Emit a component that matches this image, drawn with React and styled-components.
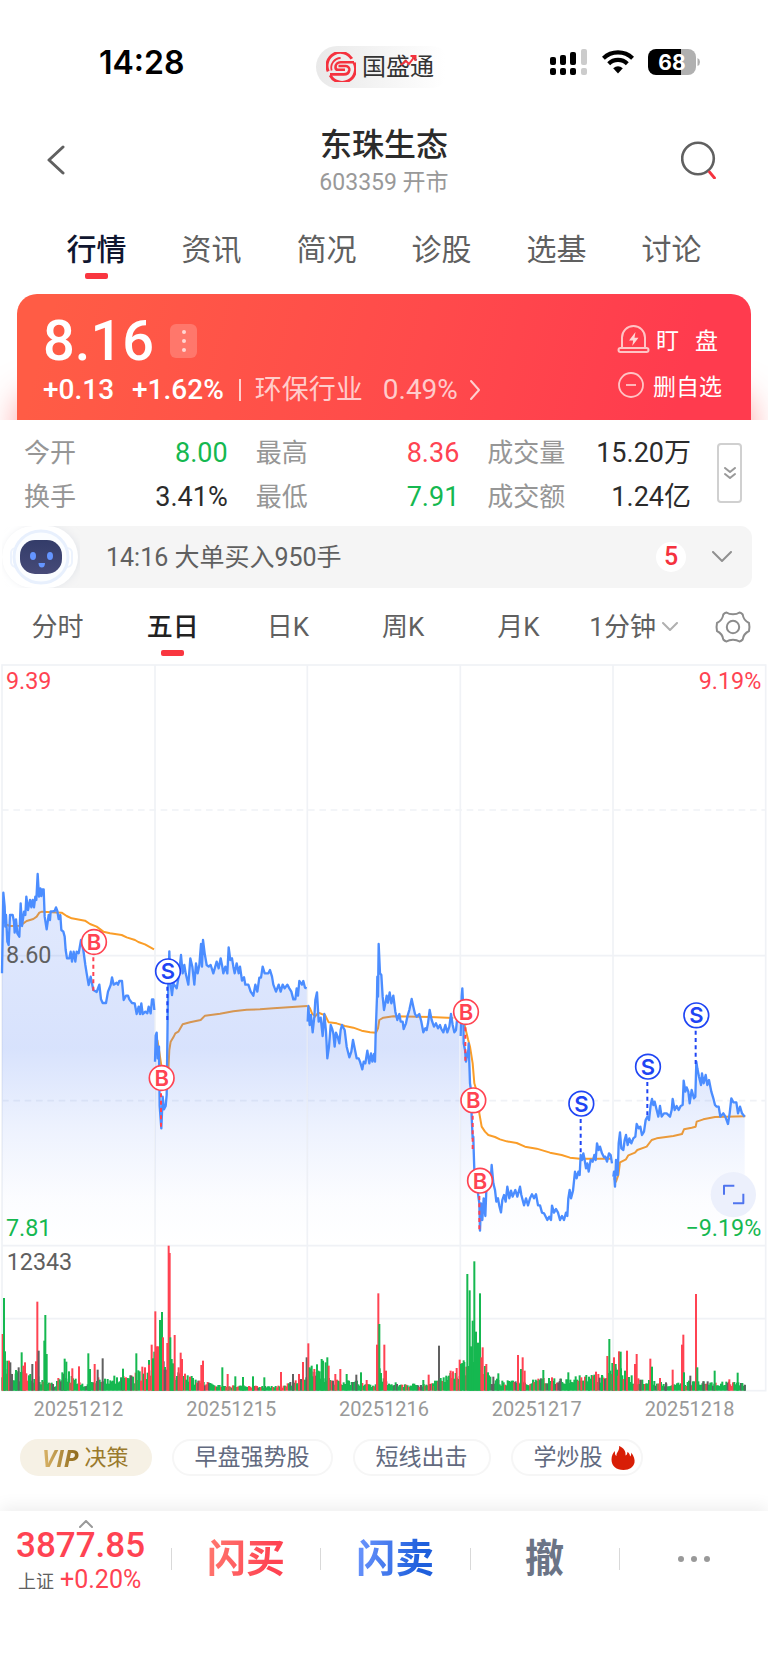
import React, { useState } from "react";
import styled, { createGlobalStyle, css } from "styled-components";

const GlobalStyle = createGlobalStyle`
  * {
    box-sizing: border-box;
  }

  body {
    margin: 0;
    background: #fff;
    color: #2b2b2b;
    font-family: Roboto, "Noto Sans CJK SC", sans-serif;
  }

  button {
    padding: 0;
    border: 0;
    background: none;
    color: inherit;
    font: inherit;
    cursor: pointer;
  }

  svg {
    display: block;
    flex: none;
  }
`;

const Page = styled.div`
  display: flex;
  flex-direction: column;
  min-height: 100vh;
`;

/* status bar */

const StatusBar = styled.div`
  display: grid;
  grid-template-columns: 1fr auto 1fr;
  align-items: center;
  padding: 46px 68px 0;
`;

const Clock = styled.time`
  padding: 0 0 8px 31px;
  color: #000;
  font-family: Inter, sans-serif;
  font-size: 32px;
  font-weight: 600;
  line-height: 34px;
`;

const Brand = styled.div`
  display: flex;
  align-items: center;
  gap: 6px;
  width: 136px;
  height: 42px;
  padding-left: 10px;
  border-radius: 21px;
  background: linear-gradient(90deg, #e9e9e9, #fff 95%);
  color: #333;
  font-size: 24px;
`;

const BrandName = styled.span`
  position: relative;
  line-height: 30px;

  svg {
    position: absolute;
    top: 2px;
    right: 16px;
  }
`;

const StatusIcons = styled.div`
  display: flex;
  align-items: center;
  justify-content: flex-end;
  gap: 14px;
  padding-bottom: 10px;
`;

/* title */

const Header = styled.header`
  display: grid;
  grid-template-columns: 1fr auto 1fr;
  margin-top: 36px;
  padding: 0 46px;
`;

const HeaderButton = styled.button`
  display: flex;
  align-items: center;
  justify-self: ${({ $end }) => ($end ? "end" : "start")};
  padding: 0 ${({ $end }) => ($end ? "5px" : "0")} 4px 0;
`;

const TitleBlock = styled.div`
  text-align: center;
`;

const Title = styled.h1`
  margin: 0;
  font-size: 32px;
  font-weight: 500;
  line-height: 42px;
`;

const Subtitle = styled.div`
  color: #999;
  font-size: 23px;
  line-height: 34px;
`;

/* tabs */

const Tabs = styled.nav`
  display: grid;
  grid-template-columns: repeat(6, 1fr);
  padding: 28px 39px 15px;
`;

const PeriodTabs = styled.nav`
  display: grid;
  grid-template-columns: repeat(6, 3fr) 2fr;
  padding: 17px 0 7px;
`;

const Tab = styled.button`
  display: flex;
  flex-direction: column;
  align-items: center;
  color: #606060;
  font-size: ${({ $small }) => ($small ? "26px" : "30px")};
  line-height: 44px;

  &::after {
    content: "";
    width: 23px;
    height: 6px;
    margin-top: 1px;
    border-radius: 2px;
  }

  ${({ $active, $small }) =>
    $active &&
    css`
      color: ${$small ? "#222" : "#10162f"};
      font-weight: 500;

      &::after {
        background: #f93640;
      }
    `}
`;

const TabLabel = styled.span`
  display: flex;
  align-items: center;
  gap: 6px;
`;

const SettingsButton = styled.button`
  display: flex;
  justify-content: center;
  padding: 5px 0 9px 7px;
`;

/* quote card */

const QuoteArea = styled.section`
  overflow: hidden;
  padding: 0 17px;
`;

const QuoteCard = styled.div`
  display: flex;
  justify-content: space-between;
  padding: 17px 29px 11px 26px;
  border-radius: 20px 20px 0 0;
  background: linear-gradient(105deg, #ff5c45 5%, #ff4a4b 55%, #ff3b4e 90%);
  box-shadow: 0 100px 32px rgba(255, 70, 70, 0.5);
  color: #fff;
`;

const PriceRow = styled.div`
  display: flex;
  align-items: center;
  gap: 16px;
  font-size: 56px;
  font-weight: 500;
  line-height: 60px;
`;

const MoreButton = styled.button`
  display: flex;
  flex-direction: column;
  align-items: center;
  justify-content: space-around;
  width: 27px;
  height: 34px;
  padding: 3px 0;
  border-radius: 6px;
  background: rgba(255, 255, 255, 0.2);

  i {
    width: 4px;
    height: 4px;
    border-radius: 50%;
    background: rgba(255, 255, 255, 0.7);
  }
`;

const ChangeRow = styled.div`
  display: flex;
  align-items: center;
  font-size: 28px;
  font-weight: 500;
  line-height: 38px;
`;

const ChangePercent = styled.span`
  margin-left: 18px;
`;

const Industry = styled.a`
  display: flex;
  align-items: center;
  gap: 20px;
  margin-left: 15px;
  color: rgba(255, 255, 255, 0.72);
  font-size: 27px;
  font-weight: 400;
  text-decoration: none;

  &::before {
    content: "";
    width: 2px;
    height: 22px;
    margin-right: -6px;
    background: currentColor;
  }

  svg {
    margin-left: -9px;
  }
`;

const IndustryChange = styled.span`
  font-size: 28px;
`;

const CardActions = styled.div`
  display: flex;
  flex-direction: column;
  padding-top: 5px;
`;

const CardAction = styled.button`
  display: flex;
  align-items: center;
  gap: 5px;
  height: 46px;
  font-size: 23px;
`;

const SpacedWord = styled.span`
  display: flex;
  gap: 16px;
`;

/* figures */

const Stats = styled.section`
  display: flex;
  align-items: flex-start;
  padding: 11px 26px 7px 24px;
`;

const StatGrid = styled.dl`
  display: grid;
  flex: 1;
  grid-template-columns: repeat(3, 1fr);
  column-gap: 28px;
  margin: 0;
`;

const Stat = styled.div`
  display: flex;
  justify-content: space-between;
  font-size: 26px;
  line-height: 44px;

  dt {
    color: #969696;
  }

  dd {
    margin: 0;
    color: ${({ $tone }) => ($tone === "up" ? "#ff4352" : $tone === "down" ? "#15b850" : "#2b2b2b")};
    font-size: 27px;
  }
`;

const ExpandButton = styled.button`
  display: flex;
  align-items: center;
  justify-content: center;
  width: 25px;
  height: 60px;
  margin: 12px 0 0 26px;
  border: 2px solid #d0d0d0;
  border-radius: 4px;
`;

/* alert bar */

const Alert = styled.section`
  display: flex;
  align-items: center;
  height: 62px;
  margin: 0 16px 0 2px;
  padding-right: 20px;
  border-radius: 32px 12px 12px 32px;
  background: #f5f5f5;
`;

const AlertText = styled.span`
  flex: 1;
  margin-left: 26px;
  padding-bottom: 4px;
  color: #606060;
  font-size: 25px;
`;

const Badge = styled.span`
  width: 30px;
  margin-right: 26px;
  border-radius: 50%;
  background: #fff;
  color: #f5323e;
  font-size: 25px;
  font-weight: 500;
  line-height: 30px;
  text-align: center;
`;

/* chart */

const ChartSvg = styled.svg`
  width: 100%;
  height: auto;

  text {
    font-size: 70px;
  }
`;

const Dates = styled.div`
  display: grid;
  grid-template-columns: repeat(5, 1fr);
  padding: 0 2px;
  color: #999;
  font-size: 20px;
  line-height: 32px;
  text-align: center;
`;

const Chips = styled.div`
  display: flex;
  gap: 20px;
  margin: 14px 20px 35px;
`;

const Chip = styled.button`
  display: flex;
  align-items: center;
  gap: 4px;
  height: 37px;
  padding: 0 ${({ $flame }) => ($flame ? "6px" : "22px")} 0 20px;
  border: 2px solid #f6f6f6;
  border-radius: 19px;
  color: #626a80;
  font-size: 23px;
  line-height: 30px;

  svg {
    margin-left: 5px;
  }

  ${({ $vip }) =>
    $vip &&
    css`
      border-color: #f6f1e5;
      background: #f6f1e5;
      color: #9a7a2c;
      font-size: 22px;
    `}
`;

const Vip = styled.em`
  padding-right: 2px;
  background: linear-gradient(90deg, #dcb66a, #8b6718);
  background-clip: text;
  color: transparent;
  font-family: "Open Sans", sans-serif;
  font-size: 24px;
  font-weight: 700;
`;

/* trade bar */

const TradeBar = styled.footer`
  display: grid;
  flex: 1;
  grid-template-columns: 171px repeat(4, 1fr);
  align-content: start;
  padding-top: 8px;
  box-shadow: 0 -4px 16px rgba(0, 0, 0, 0.07);
`;

const IndexButton = styled.button`
  display: flex;
  flex-direction: column;
  padding-left: 16px;
  color: #ff4352;
  text-align: left;

  svg {
    margin: 1px 0 0 63px;
  }
`;

const IndexValue = styled.strong`
  font-size: 35px;
  font-weight: 500;
  line-height: 36px;
`;

const IndexChange = styled.span`
  padding-left: 2px;
  font-size: 25px;
  line-height: 32px;

  small {
    margin-right: 6px;
    color: #606060;
    font-size: 18px;
  }
`;

const TradeButton = styled.button`
  display: flex;
  align-items: center;
  justify-content: center;

  &::before {
    content: "";
    width: 1px;
    height: 22px;
    margin-right: auto;
    background: #d9d9d9;
  }

  &::after {
    content: "";
    margin-right: auto;
  }
`;

const TradeLabel = styled.span`
  color: #6b7486;
  font-size: 39px;
  font-weight: 600;
  line-height: 50px;

  ${({ $from, $to }) =>
    $from &&
    css`
      background: linear-gradient(100deg, ${$from}, ${$to} 80%);
      background-clip: text;
      color: transparent;
    `}
`;

const Dots = styled.span`
  display: flex;
  gap: 7px;

  i {
    width: 6px;
    height: 6px;
    border-radius: 50%;
    background: #999;
  }
`;

const Chevron = ({ d, w, h, color, stroke = 2 }) => (
  <svg width={w} height={h} viewBox={`0 0 ${w} ${h}`} fill="none" stroke={color} strokeWidth={stroke} strokeLinecap="round" strokeLinejoin="round">
    <path d={d} />
  </svg>
);

const BrandLogo = () => (
  <svg width="30" height="30" viewBox="0 0 30 30" fill="none" stroke="#f5323e" strokeWidth="3">
    <path d="M2.2 19.4A13.4 13.4 0 0 1 25.8 6.8" />
    <path d="M4.2 23.2A13.4 13.4 0 0 0 28 10.6" />
    <path d="M28 10.2H14.5a5 5 0 0 0-5 5 2.6 2.6 0 0 0 2.6 2.6H19" strokeWidth="2.6" />
    <path d="M12.5 14h7.4a3.6 3.6 0 0 1 3.4 4c-.4 2.8-2.6 4.4-5.6 4.4H4" strokeWidth="2.6" />
    <path d="M5.6 18.4A9.8 9.8 0 0 1 14.6 6" strokeWidth="1.8" />
  </svg>
);

const Signal = () => (
  <svg width="38" height="28" viewBox="0 0 38 28">
    {[
      [0, 9],
      [10, 7],
      [20, 4],
      [31, 1],
    ].map(([x, y], i) => (
      <g key={x} fill={i === 3 ? "#ccc" : "#000"}>
        <rect x={x} y={y} width="6" height={17 - y} rx="2" />
        <rect x={x} y="20" width="6" height="7" rx="2" />
      </g>
    ))}
  </svg>
);

const Wifi = () => (
  <svg width="32" height="24" viewBox="0 0 32 24" fill="none" stroke="#000" strokeWidth="4.2">
    <path d="M1.4 8.2A21.4 21.4 0 0 1 30.6 8.2" />
    <path d="M6.7 13.7A13.4 13.4 0 0 1 25.3 13.7" />
    <path d="M11.2 18.2Q16 14.2 20.8 18.2L16 23.6Z" fill="#000" stroke="none" />
  </svg>
);

const Battery = () => (
  <svg width="52" height="26" viewBox="0 0 52 26">
    <path d="M33 0h7a8 8 0 0 1 8 8v10a8 8 0 0 1-8 8h-7z" fill="#b0b0b0" />
    <path d="M8 0h25v26H8a8 8 0 0 1-8-8V8a8 8 0 0 1 8-8z" fill="#000" />
    <path d="M49.5 9q2.5 1 2.5 4t-2.5 4z" fill="#b0b0b0" />
    <text x="24" y="20.5" fill="#fff" fontFamily="Inter, sans-serif" fontSize="21" fontWeight="700" textAnchor="middle">
      68
    </text>
  </svg>
);

const SearchIcon = () => (
  <svg width="36" height="38" viewBox="0 0 36 38" fill="none" strokeLinecap="round">
    <circle cx="17" cy="17.5" r="15.8" stroke="#606060" strokeWidth="2.6" />
    <path d="M28.5 31l5 6" stroke="#f5323e" strokeWidth="2.8" />
  </svg>
);

const SirenIcon = () => (
  <svg width="34" height="30" viewBox="0 0 34 30" fill="none" stroke="#ffc4c5" strokeWidth="2">
    <path d="M5 24V13.5a11.5 11.5 0 0 1 23 0V24" />
    <rect x="1.5" y="24" width="30" height="4" rx="2" />
    <path d="M18.5 8l-6.5 8.5h4.2L15.2 22l6.3-8.2h-4z" fill="#ffd5d5" stroke="none" />
  </svg>
);

const MinusIcon = () => (
  <svg width="31" height="28" viewBox="0 0 31 28" fill="none" stroke="#ffc4c5" strokeWidth="1.8">
    <circle cx="14" cy="14" r="12" />
    <path d="M9 14h10" />
  </svg>
);

const Robot = () => (
  <svg width="78" height="62" viewBox="0 0 78 62">
    <defs>
      <linearGradient id="robotFace" x1="0" y1="0" x2="0" y2="1">
        <stop offset="0" stopColor="#333c69" />
        <stop offset="1" stopColor="#464a78" />
      </linearGradient>
      <filter id="robotShadow" x="-20%" y="-20%" width="140%" height="140%">
        <feGaussianBlur stdDeviation="4" />
      </filter>
    </defs>
    <ellipse cx="40" cy="31" rx="37" ry="31" fill="#dfe2e8" filter="url(#robotShadow)" />
    <rect width="76" height="62" rx="31" fill="#fff" />
    <rect x="9" y="22" width="61" height="19" rx="5" fill="#fff" stroke="#edf3fd" strokeWidth="2" />
    <ellipse cx="39" cy="31" rx="27" ry="26" fill="#fbfdff" stroke="#e8f0fd" strokeWidth="3" />
    <rect x="18" y="14" width="42" height="34" rx="15" fill="url(#robotFace)" />
    <ellipse cx="31" cy="30" rx="3" ry="4" fill="#6495ff" />
    <ellipse cx="48" cy="30" rx="3" ry="4" fill="#6495ff" />
    <path d="M36.5 37H43c0 3-1.3 4.5-3.2 4.5S36.5 40 36.5 37z" fill="#6495ff" />
  </svg>
);

const GearIcon = () => (
  <svg width="36" height="34" viewBox="0 0 36 34" fill="none" stroke="#8c8c8c" strokeWidth="2" strokeLinejoin="round">
    <path d="M11.5 2.5q2.5 1.8 6.5 1.8t6.5-1.8q1.8.4 3.2 2c.5 4 2.3 6.5 6.3 8.5q.9 4 0 8c-4 2-5.8 4.5-6.3 8.5q-1.4 1.6-3.2 2-2.5-1.8-6.5-1.8t-6.5 1.8q-1.8-.4-3.2-2c-.5-4-2.3-6.5-6.3-8.5q-.9-4 0-8c4-2 5.8-4.5 6.3-8.5q1.4-1.6 3.2-2z" />
    <circle cx="18" cy="17" r="6.2" />
  </svg>
);

const Flame = () => (
  <svg width="24" height="24" viewBox="0 0 24 24" fill="#d81e06">
    <path d="M8 0c5 2 7 5.5 6.5 9.5 1.5-.6 2-2 1.8-3.5 2 1 2.7 2.5 2.7 4.5 1.2-1 1.4-2.5 1-4 3 3.5 4 7 3.5 10-.8 4.5-5 7.5-11 7.5-7 0-12-4-12-10.5C.5 9.5 2 7 4 5c-.3 2.5 0 4.3 1.5 5C5 6 9 5 8 0z" />
  </svg>
);

// Chart coordinates run at three units per pixel, prices are shifted down by PRICE_TOP.
const PRICE_TOP = 561;
const VOLUME_BASE = 2183;
const DAY_LINES = [6, 465, 922, 1381, 1839, 2297];

const parse = (text, dx = 0) =>
  text
    .trim()
    .split(/\s+/)
    .map((pair) => pair.split(",").map(Number))
    .map(([x, y]) => [x + dx, y]);

const priceDays = [
  parse(`6,370 10,128 14,170 16,230 18,195 22,275 26,285 30,195 38,195 42,215 44,248 48,208 52,250 58,260 62,160 66,228
    72,185 76,195 79,140 84,180 90,150 94,172 98,150 102,172 106,140 109,150 113,72 117,140 121,115 124,138 127,118
    131,118 134,200 140,238 146,195 150,210 152,184 158,184 164,183 168,172 172,183 176,207 181,195 184,240 190,245
    194,260 197,300 201,325 208,325 212,305 216,335 221,305 226,335 230,305 236,310 243,270 250,300 256,345 260,370
    266,405 272,380 280,420 290,426 298,404 303,448 308,459 318,459 324,425 332,405 336,382 341,404 350,398 354,404
    358,393 366,393 371,450 378,437 384,437 388,448 396,459 404,460 410,492 416,470 420,492 424,460 428,492 436,485
    442,490 446,470 452,490 456,448 460,448 463,480`),
  parse(`465,635 467,557 470,548 473,625 477,590 479,768 484,835 488,740 492,778 497,768 500,735 503,500 505,400 508,304
    511,395 516,435 520,400 530,415 536,380 543,315 548,370 553,345 557,370 565,404 571,325 577,350 583,404 588,340
    593,370 598,345 603,282 606,350 609,270 614,310 620,345 626,350 632,345 640,370 650,335 656,355 662,325 666,345
    670,370 676,350 682,370 686,292 691,330 696,325 700,350 704,370 710,340 716,370 720,350 726,392 732,382 736,404
    745,404 752,425 760,437 766,404 772,425 778,383 783,383 788,350 794,370 805,370 810,360 816,380 820,404 828,425
    836,404 842,425 848,404 854,415 862,404 868,415 874,425 880,448 886,448 890,415 894,437 898,393 906,404 910,393
    915,413 920,415`),
  parse(
    `173,515 175,468 179,525 183,495 188,547 193,500 196,450 201,427 206,515 212,503 218,558 223,492 228,545 232,625
    237,590 242,525 246,535 250,550 254,590 258,548 263,560 268,580 272,540 276,525 284,540 290,590 298,622 304,605
    309,570 315,600 320,625 326,625 330,635 337,658 341,635 346,640 352,602 358,640 363,610 367,635 372,612 375,635
    377,550 381,440 382,380 384,440 386,282 390,370 394,375 398,440 402,480 406,460 410,437 414,458 419,427 424,460
    430,437 436,485 442,510 448,492 452,515 458,515 461,537 468,520 472,500 478,480 485,447 490,470 495,492 500,500
    508,492 514,515 520,547 526,535 530,540 534,520 539,480 545,510 552,530 558,520 564,535 570,525 574,537 580,547
    586,525 592,547 598,530 603,492 608,525 613,547 618,540 624,480 628,500`,
    750
  ),
  parse(
    `-118,558 -115,440 -113,415 -110,480 -109,580 -105,600 -102,635 -98,612 -95,600 -94,580 -92,640 -90,700 -87,720
    -85,800 -82,865 -80,860 -79,900 -77,960 -70,1000 -62,1060 -60,1142 -57,1060 -53,1110 -49,1045 -44,1098 -41,1020
    -34,980 -28,995 -25,945 -20,1000 -15,1020 -11,1055 -6,1045 -2,1068 3,1087 7,1050 12,1035 17,1055 22,1010 28,1045
    33,1022 38,1040 46,1020 52,1040 57,1022 60,1010 64,1035 72,1066 78,1045 84,1066 90,1045 96,1033 102,1045 108,1033
    114,1066 120,1066 126,1088 132,1090 142,1110 148,1100 153,1110 156,1067 162,1088 168,1077 174,1088 180,1110
    186,1098 192,1110 198,1088 202,1098 205,1045 209,1020 213,1045 219,1022 225,965 230,985 235,965 239,975 242,915
    246,930 250,910 254,930 258,955 262,940 266,965 272,930 278,935 283,915 287,930 291,880 296,900 300,890 306,910
    312,922 316,920 321,935 327,910 332,915 336,940`,
    1500
  ),
  parse(
    `340,980 342,965 345,1010 348,930 353,975 356,880 360,847 364,895 370,900 374,870 378,855 383,885 388,865 394,880
    400,865 406,860 410,822 416,835 421,830 426,855 432,845 437,810 442,800 447,810 452,765 456,747 460,765 464,755
    470,780 475,800 480,768 485,800 492,790 500,790 510,800 515,780 518,747 524,780 530,768 536,780 542,768 548,765
    551,692 556,725 560,712 565,725 569,760 575,720 582,745 586,740 589,635 592,655 597,680 603,705 606,670 611,700
    617,675 622,705 627,690 634,725 640,745 645,765 650,770 656,770 661,800 670,790 676,800 684,822 689,790 694,745
    700,757 709,757 714,790 720,770 726,790 734,800`,
    1500
  ),
];

const averageDays = [
  parse(`14,228 22,225 30,228 60,227 70,220 80,213 100,207 110,200 118,188 126,185 185,188 200,198 215,205 255,212
    270,222 290,230 310,245 330,250 365,255 380,262 405,270 415,276 435,283 462,298`),
  parse(`472,570 477,600 483,640 490,690 500,700 505,660 508,600 512,575 520,562 526,550 535,545 548,523 570,517
    602,510 615,497 660,491 700,484 740,479 780,478 820,475 922,468`),
  parse(
    `175,468 180,475 186,490 195,500 205,488 215,492 225,495 236,517 260,520 285,528 310,533 335,542 360,547 378,548
    384,535 388,510 400,503 430,499 540,501 610,504`,
    750
  ),
  parse(
    `-114,490 -105,530 -96,568 -90,590 -82,640 -77,700 -65,740 -62,790 -55,830 -45,845 -35,855 -15,861 0,868 20,874
    50,879 75,890 110,896 150,908 185,915 210,923 240,926 335,926`,
    1500
  ),
  parse(
    `342,985 348,995 355,975 360,937 378,928 385,916 405,908 412,900 440,890 455,870 470,865 520,858 546,852 552,838
    575,833 587,830 590,815 610,808 645,801 736,799`,
    1500
  ),
];

const markers = [
  { side: "B", x: 282, y: 276 },
  { side: "B", x: 485, y: 684 },
  { side: "S", x: 504, y: 364 },
  { side: "B", x: 1398, y: 486 },
  { side: "B", x: 1420, y: 751 },
  { side: "B", x: 1440, y: 992 },
  { side: "S", x: 1744, y: 761 },
  { side: "S", x: 1944, y: 650 },
  { side: "S", x: 2089, y: 496 },
];

const volumeColors = { r: "#ff4352", g: "#15b850", k: "#606060" };

// usual bar height along the axis
const volumeLevels = parse(`6,70 60,54 100,50 146,28 165,12 180,55 205,56 250,18 300,38 400,44 450,95 480,135 500,75 530,65
  600,28 650,12 850,10 900,46 950,75 1000,28 1060,28 1120,12 1140,66 1160,32 1200,16 1290,16 1370,60 1400,120 1440,110
  1470,44 1500,26 1600,30 1700,40 1800,46 1850,76 1900,38 2000,18 2040,20 2090,30 2240,20`);

const volumePeaks = `8,170,r 12,278,g 15,118,g 22,90,g 27,90,r 31,85,k 36,50,k 48,62,g 56,70,k 65,115,g 70,75,r 75,85,r
  97,80,k 108,88,r 112,267,r 116,120,k 133,150,g 136,227,g 140,110,g 187,55,g 194,96,g 199,87,g 217,67,r 237,73,r
  265,112,g 270,65,g 284,80,r 293,63,k 308,97,k 369,66,g 378,40,r 393,45,k 409,112,g 435,70,r 447,78,r 455,138,r
  459,97,g 463,117,g 466,238,r 471,133,r 475,133,r 480,212,g 486,236,g 489,160,r 494,63,k 502,143,r 506,435,r 509,413,r
  511,160,g 515,95,g 519,82,g 524,167,r 536,70,r 542,114,r 546,95,r 570,42,r 604,77,r 609,90,r 667,70,g 683,50,r
  706,43,g 729,41,g 759,43,g 793,40,g 843,56,r 879,50,k 897,50,r 909,86,r 920,100,k 925,142,r 929,70,g 935,75,g
  943,65,r 955,60,g 965,95,g 969,90,g 977,85,g 982,100,g 986,75,r 1006,50,r 1021,65,r 1040,50,g 1069,48,k 1083,55,g
  1100,32,r 1131,138,r 1135,292,r 1138,200,g 1153,138,r 1158,60,r 1270,32,g 1286,48,r 1305,30,g 1317,135,k 1322,38,g
  1340,42,g 1352,60,r 1370,68,r 1379,93,r 1383,80,g 1393,86,g 1402,350,g 1409,301,g 1413,133,g 1418,210,g 1423,388,g
  1428,177,g 1434,144,g 1440,292,g 1444,100,r 1448,130,r 1459,80,r 1464,55,g 1480,42,k 1495,52,g 1554,107,r 1563,65,g
  1568,100,r 1574,60,r 1630,62,g 1656,40,r 1681,36,k 1705,55,g 1744,40,r 1767,42,g 1788,57,r 1806,47,g 1822,104,r
  1828,155,g 1837,83,g 1842,100,r 1847,80,g 1857,118,r 1862,117,g 1881,120,r 1905,80,r 1910,110,r 1921,33,k 1951,96,r
  1956,72,g 1980,38,r 1998,25,k 2018,63,r 2046,138,r 2050,168,r 2052,55,g 2071,45,k 2088,290,r 2092,70,g 2110,28,k
  2144,60,g 2188,34,r 2213,54,g 2234,18,k`
  .trim()
  .split(/\s+/)
  .map((item) => item.split(","))
  .map(([x, h, tone]) => ({ x: Number(x), h: Number(h), tone }));

const levelAt = (x) => {
  const i = Math.max(1, volumeLevels.findIndex(([px]) => px >= x));
  const [x0, y0] = volumeLevels[i - 1];
  const [x1, y1] = volumeLevels[i];
  return y0 + ((y1 - y0) * (x - x0)) / (x1 - x0);
};

const buildVolume = () => {
  let seed = 17;
  const random = () => {
    seed = (seed * 16807) % 2147483647;
    return seed / 2147483647;
  };
  const bars = [];
  for (let x = 7; x < 2237; x += 4) {
    const pick = random();
    bars.push({
      x,
      h: Math.round(5 + levelAt(x) * (0.35 + random() * 0.65)),
      tone: pick < 0.7 ? "g" : pick < 0.9 ? "r" : "k",
    });
  }
  return bars;
};

const volumeBars = [...buildVolume(), ...volumePeaks];

const toPoints = (points) => points.map((p) => p.join(",")).join(" ");

const toArea = (points) =>
  `${points[0][0]},1187 ${toPoints(points)} ${points[points.length - 1][0]},1187`;

const Marker = ({ side, x, y }) => {
  const color = side === "B" ? "#ff4352" : "#1f45f4";
  return (
    <g>
      <path d={`M${x - 2} ${y + 46}V${y + 152}`} stroke={color} strokeWidth="6" strokeDasharray="12 10" />
      <circle cx={x} cy={y} r="37" fill="#fff" stroke={color} strokeWidth="5" />
      <text x={x} y={y + 24} fill={color} fontFamily="Inter, sans-serif" fontWeight="600" textAnchor="middle" style={{ fontSize: 66 }}>
        {side}
      </text>
    </g>
  );
};

const Chart = () => (
  <ChartSvg viewBox="0 0 2304 2190" role="img" aria-label="五日走势">
    <defs>
      <linearGradient id="priceArea" gradientUnits="userSpaceOnUse" x1="0" y1="0" x2="0" y2="1187">
        <stop offset="0" stopColor="#4c7cf5" stopOpacity="0.15" />
        <stop offset="0.5" stopColor="#4c7cf5" stopOpacity="0.22" />
        <stop offset="0.7" stopColor="#4c7cf5" stopOpacity="0.1" />
        <stop offset="0.88" stopColor="#4c7cf5" stopOpacity="0.02" />
        <stop offset="1" stopColor="#4c7cf5" stopOpacity="0" />
      </linearGradient>
    </defs>

    <g stroke="#f0f2f6" strokeWidth="5" fill="none">
      <rect x="6" y="6" width="2291" height="2177" />
      <path d="M6 878H2297M6 1748H2297M6 1967H2297" />
      {DAY_LINES.slice(1, 5).map((x) => (
        <path key={x} d={`M${x} 6V${VOLUME_BASE}`} />
      ))}
      <path d="M6 441H2297M6 1313H2297" strokeDasharray="20 14" />
    </g>

    <g transform={`translate(0 ${PRICE_TOP})`} fill="none" strokeLinejoin="round">
      {averageDays.map((day, i) => (
        <polyline key={i} points={toPoints(day)} stroke="#fa9d28" strokeWidth="6" />
      ))}
      {priceDays.map((day, i) => (
        <polygon key={i} points={toArea(day)} fill="url(#priceArea)" />
      ))}
      {priceDays.map((day, i) => (
        <polyline key={i} points={toPoints(day)} stroke="#4b8dff" strokeWidth="7" />
      ))}
      {markers.map((marker) => (
        <Marker key={marker.x} {...marker} />
      ))}
      <circle cx="2200" cy="1034" r="68" fill="#ecf0fc" />
      <path d="M2172 1034V1007H2203M2199 1060H2230V1031" stroke="#4f74ee" strokeWidth="6" />
    </g>

    <text x="18" y="78" fill="#ff4352">9.39</text>
    <text x="2284" y="78" fill="#ff4352" textAnchor="end">9.19%</text>
    <text x="18" y="900" fill="#606060">8.60</text>
    <text x="18" y="1718" fill="#15b850">7.81</text>
    <text x="2284" y="1718" fill="#15b850" textAnchor="end">−9.19%</text>
    <text x="20" y="1822" fill="#606060">12343</text>

    {volumeBars.map(({ x, h, tone }, i) => (
      <rect key={i} x={x - 3} y={VOLUME_BASE - h} width="6" height={h} fill={volumeColors[tone]} />
    ))}
  </ChartSvg>
);

const tabs = ["行情", "资讯", "简况", "诊股", "选基", "讨论"];
const periods = ["分时", "五日", "日K", "周K", "月K", "1分钟"];
const dates = ["20251212", "20251215", "20251216", "20251217", "20251218"];

const stats = [
  { label: "今开", value: "8.00", tone: "down" },
  { label: "最高", value: "8.36", tone: "up" },
  { label: "成交量", value: "15.20万" },
  { label: "换手", value: "3.41%" },
  { label: "最低", value: "7.91", tone: "down" },
  { label: "成交额", value: "1.24亿" },
];

const App = () => {
  const [tab, setTab] = useState("行情");
  const [period, setPeriod] = useState("五日");

  return (
    <Page>
      <GlobalStyle />

      <StatusBar>
        <Clock>14:28</Clock>
        <Brand>
          <BrandLogo />
          <BrandName>
            国盛通
            <svg width="18" height="13" viewBox="0 0 18 13" fill="none" stroke="#f5323e" strokeWidth="2">
              <path d="M1 11l5-4 3 3 6-8M10.5 2h5v5" />
            </svg>
          </BrandName>
        </Brand>
        <StatusIcons>
          <Signal />
          <Wifi />
          <Battery />
        </StatusIcons>
      </StatusBar>

      <Header>
        <HeaderButton aria-label="返回">
          <Chevron d="M17 2L3 15l14 13" w={20} h={30} color="#606060" stroke={3} />
        </HeaderButton>
        <TitleBlock>
          <Title>东珠生态</Title>
          <Subtitle>603359 开市</Subtitle>
        </TitleBlock>
        <HeaderButton $end aria-label="搜索">
          <SearchIcon />
        </HeaderButton>
      </Header>

      <Tabs>
        {tabs.map((name) => (
          <Tab key={name} $active={tab === name} onClick={() => setTab(name)}>
            {name}
          </Tab>
        ))}
      </Tabs>

      <QuoteArea>
        <QuoteCard>
          <div>
            <PriceRow>
              8.16
              <MoreButton aria-label="更多">
                <i />
                <i />
                <i />
              </MoreButton>
            </PriceRow>
            <ChangeRow>
              <span>+0.13</span>
              <ChangePercent>+1.62%</ChangePercent>
              <Industry href="#industry">
                <span>环保行业</span>
                <IndustryChange>0.49%</IndustryChange>
                <Chevron d="M2 2l8 9-8 9" w={12} h={22} color="#ffd0d0" />
              </Industry>
            </ChangeRow>
          </div>
          <CardActions>
            <CardAction>
              <SirenIcon />
              <SpacedWord>
                <span>盯</span>
                <span>盘</span>
              </SpacedWord>
            </CardAction>
            <CardAction>
              <MinusIcon />
              删自选
            </CardAction>
          </CardActions>
        </QuoteCard>
      </QuoteArea>

      <Stats>
        <StatGrid>
          {stats.map(({ label, value, tone }) => (
            <Stat key={label} $tone={tone}>
              <dt>{label}</dt>
              <dd>{value}</dd>
            </Stat>
          ))}
        </StatGrid>
        <ExpandButton aria-label="展开">
          <Chevron d="M1 1l5 4 5-4M1 7l5 4 5-4" w={12} h={12} color="#999" />
        </ExpandButton>
      </Stats>

      <Alert>
        <Robot />
        <AlertText>14:16 大单买入950手</AlertText>
        <Badge>5</Badge>
        <button aria-label="展开消息">
          <Chevron d="M1 1l9 9 9-9" w={20} h={12} color="#909090" />
        </button>
      </Alert>

      <PeriodTabs>
        {periods.map((name) => (
          <Tab key={name} $small $active={period === name} onClick={() => setPeriod(name)}>
            <TabLabel>
              {name}
              {name === "1分钟" && <Chevron d="M1 1l7 7 7-7" w={16} h={10} color="#b0b0b0" />}
            </TabLabel>
          </Tab>
        ))}
        <SettingsButton aria-label="设置">
          <GearIcon />
        </SettingsButton>
      </PeriodTabs>

      <Chart />

      <Dates>
        {dates.map((date) => (
          <span key={date}>{date}</span>
        ))}
      </Dates>

      <Chips>
        <Chip $vip>
          <Vip>VIP</Vip>
          决策
        </Chip>
        <Chip>早盘强势股</Chip>
        <Chip>短线出击</Chip>
        <Chip $flame>
          学炒股
          <Flame />
        </Chip>
      </Chips>

      <TradeBar>
        <IndexButton>
          <Chevron d="M1 7l6-6 6 6" w={14} h={8} color="#999" />
          <IndexValue>3877.85</IndexValue>
          <IndexChange>
            <small>上证</small>
            +0.20%
          </IndexChange>
        </IndexButton>
        <TradeButton>
          <TradeLabel $from="#ff7a70" $to="#ff4352">闪买</TradeLabel>
        </TradeButton>
        <TradeButton>
          <TradeLabel $from="#6f97ff" $to="#1e5fdc">闪卖</TradeLabel>
        </TradeButton>
        <TradeButton>
          <TradeLabel>撤</TradeLabel>
        </TradeButton>
        <TradeButton aria-label="更多操作">
          <Dots>
            <i />
            <i />
            <i />
          </Dots>
        </TradeButton>
      </TradeBar>
    </Page>
  );
};

export default App;
